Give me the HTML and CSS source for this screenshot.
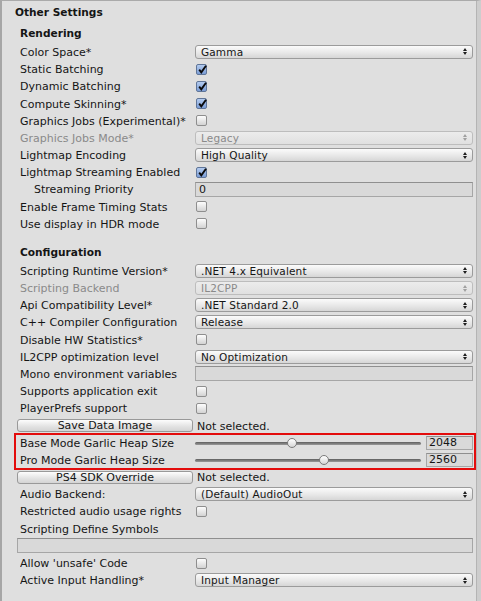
FILE: index.html
```html
<!DOCTYPE html>
<html>
<head>
<meta charset="utf-8">
<link rel="stylesheet" href="styles.css">
</head>
<body>
<div class="panel">
  <div class="title">Other Settings</div>

  <div class="section-head first">Rendering</div>
  <div class="row"><span class="label">Color Space*</span><div class="ctrl"><div class="dropdown"><span>Gamma</span><svg class="arrows" viewBox="0 0 4 7"><path d="M2 0L4 3H0ZM0 4H4L2 7Z"/></svg></div></div></div>
  <div class="row"><span class="label">Static Batching</span><div class="ctrl"><span class="cb on"><svg viewBox="0 0 11 11"><path d="M2.2 5.6L4.3 8.3L9 1.8" /></svg></span></div></div>
  <div class="row"><span class="label">Dynamic Batching</span><div class="ctrl"><span class="cb on"><svg viewBox="0 0 11 11"><path d="M2.2 5.6L4.3 8.3L9 1.8" /></svg></span></div></div>
  <div class="row"><span class="label">Compute Skinning*</span><div class="ctrl"><span class="cb on"><svg viewBox="0 0 11 11"><path d="M2.2 5.6L4.3 8.3L9 1.8" /></svg></span></div></div>
  <div class="row"><span class="label">Graphics Jobs (Experimental)*</span><div class="ctrl"><span class="cb"></span></div></div>
  <div class="row disabled"><span class="label">Graphics Jobs Mode*</span><div class="ctrl"><div class="dropdown"><span>Legacy</span><svg class="arrows" viewBox="0 0 4 7"><path d="M2 0L4 3H0ZM0 4H4L2 7Z"/></svg></div></div></div>
  <div class="row"><span class="label">Lightmap Encoding</span><div class="ctrl"><div class="dropdown"><span>High Quality</span><svg class="arrows" viewBox="0 0 4 7"><path d="M2 0L4 3H0ZM0 4H4L2 7Z"/></svg></div></div></div>
  <div class="row"><span class="label">Lightmap Streaming Enabled</span><div class="ctrl"><span class="cb on"><svg viewBox="0 0 11 11"><path d="M2.2 5.6L4.3 8.3L9 1.8" /></svg></span></div></div>
  <div class="row"><span class="label indent">Streaming Priority</span><div class="ctrl"><div class="field">0</div></div></div>
  <div class="row"><span class="label">Enable Frame Timing Stats</span><div class="ctrl"><span class="cb"></span></div></div>
  <div class="row"><span class="label">Use display in HDR mode</span><div class="ctrl"><span class="cb"></span></div></div>

  <div class="section-head">Configuration</div>
  <div class="row"><span class="label">Scripting Runtime Version*</span><div class="ctrl"><div class="dropdown"><span>.NET 4.x Equivalent</span><svg class="arrows" viewBox="0 0 4 7"><path d="M2 0L4 3H0ZM0 4H4L2 7Z"/></svg></div></div></div>
  <div class="row disabled"><span class="label">Scripting Backend</span><div class="ctrl"><div class="dropdown"><span>IL2CPP</span><svg class="arrows" viewBox="0 0 4 7"><path d="M2 0L4 3H0ZM0 4H4L2 7Z"/></svg></div></div></div>
  <div class="row"><span class="label">Api Compatibility Level*</span><div class="ctrl"><div class="dropdown"><span>.NET Standard 2.0</span><svg class="arrows" viewBox="0 0 4 7"><path d="M2 0L4 3H0ZM0 4H4L2 7Z"/></svg></div></div></div>
  <div class="row"><span class="label">C++ Compiler Configuration</span><div class="ctrl"><div class="dropdown"><span>Release</span><svg class="arrows" viewBox="0 0 4 7"><path d="M2 0L4 3H0ZM0 4H4L2 7Z"/></svg></div></div></div>
  <div class="row"><span class="label">Disable HW Statistics*</span><div class="ctrl"><span class="cb"></span></div></div>
  <div class="row"><span class="label">IL2CPP optimization level</span><div class="ctrl"><div class="dropdown"><span>No Optimization</span><svg class="arrows" viewBox="0 0 4 7"><path d="M2 0L4 3H0ZM0 4H4L2 7Z"/></svg></div></div></div>
  <div class="row"><span class="label">Mono environment variables</span><div class="ctrl"><div class="field"></div></div></div>
  <div class="row"><span class="label">Supports application exit</span><div class="ctrl"><span class="cb"></span></div></div>
  <div class="row"><span class="label">PlayerPrefs support</span><div class="ctrl"><span class="cb"></span></div></div>
  <div class="row btn-row"><span class="button">Save Data Image</span><span class="note">Not selected.</span></div>
  <div class="highlight">
    <div class="row"><span class="label">Base Mode Garlic Heap Size</span><div class="ctrl"><div class="slider"><div class="track"></div><span class="thumb" style="left:43.1%"></span></div><div class="num">2048</div></div></div>
    <div class="row"><span class="label">Pro Mode Garlic Heap Size</span><div class="ctrl"><div class="slider"><div class="track"></div><span class="thumb" style="left:56.9%"></span></div><div class="num">2560</div></div></div>
  </div>
  <div class="row btn-row"><span class="button">PS4 SDK Override</span><span class="note">Not selected.</span></div>
  <div class="row"><span class="label">Audio Backend:</span><div class="ctrl"><div class="dropdown"><span>(Default) AudioOut</span><svg class="arrows" viewBox="0 0 4 7"><path d="M2 0L4 3H0ZM0 4H4L2 7Z"/></svg></div></div></div>
  <div class="row"><span class="label">Restricted audio usage rights</span><div class="ctrl"><span class="cb"></span></div></div>
  <div class="row"><span class="label wide">Scripting Define Symbols</span></div>
  <div class="row full"><div class="field"></div></div>
  <div class="row"><span class="label">Allow 'unsafe' Code</span><div class="ctrl"><span class="cb"></span></div></div>
  <div class="row"><span class="label">Active Input Handling*</span><div class="ctrl"><div class="dropdown"><span>Input Manager</span><svg class="arrows" viewBox="0 0 4 7"><path d="M2 0L4 3H0ZM0 4H4L2 7Z"/></svg></div></div></div>
</div>
</body>
</html>
```
FILE: styles.css
```css
html, body {
  margin: 0;
  padding: 0;
  background: #dfdfdf;
}

.panel {
  width: 481px;
  height: 601px;
  box-sizing: border-box;
  background: #dfdfdf;
  border-top: 1px solid #aaaaaa;
  border-left: 2px solid #a6a6a6;
  border-right: 4px solid #cdcdcd;
  box-shadow: inset -1px 0 0 #b4b4b4;
  font-family: "DejaVu Sans", Verdana, sans-serif;
  font-size: 11px;
  color: #151515;
  overflow: hidden;
}

.title {
  height: 21px;
  line-height: 22px;
  padding-left: 13px;
  font-weight: bold;
  font-size: 10.6px;
}

.section-head {
  height: 18.8px;
  line-height: 19.8px;
  margin-top: 11px;
  padding-left: 18px;
  font-weight: bold;
  font-size: 10.6px;
}

.section-head.first {
  margin-top: 0;
  height: 21.4px;
  line-height: 22.4px;
}

.row {
  display: flex;
  align-items: center;
  height: 17.2px;
  padding: 0 4px 0 18px;
  white-space: nowrap;
}

.label {
  width: 175px;
  flex: none;
  overflow: hidden;
  padding-top: 1px;
}

.label.indent {
  box-sizing: border-box;
  padding-left: 14px;
}

.label.wide {
  width: auto;
}

.ctrl {
  flex: 1;
  min-width: 0;
  display: flex;
  align-items: center;
}

.dropdown {
  flex: 1;
  height: 14px;
  box-sizing: border-box;
  border: 1px solid #9b9b9b;
  border-radius: 3px;
  background: linear-gradient(#fbfbfb, #e6e6e6 60%, #d6d6d6);
  display: flex;
  align-items: center;
  justify-content: space-between;
  padding: 0 5px 0 5px;
  font-size: 10.5px;
  letter-spacing: 0.15px;
}

.arrows {
  width: 4px;
  height: 7px;
  fill: #1e1e1e;
}

.disabled {
  color: #8a8a8a;
}

.disabled .dropdown {
  border-color: #bdbdbd;
  background: linear-gradient(#ececec, #e0e0e0);
}

.disabled .arrows {
  fill: #a0a0a0;
}

.cb {
  width: 11px;
  height: 11px;
  box-sizing: border-box;
  margin-left: 1px;
  border: 1px solid #8e8e8e;
  border-radius: 2px;
  background: linear-gradient(#fdfdfd, #d3d3d3);
  display: block;
  position: relative;
}

.cb.on {
  border-color: #5f7598;
  background: linear-gradient(#b3cbef, #7b9dd6);
}

.cb svg {
  position: absolute;
  left: 0;
  top: -1px;
  width: 11px;
  height: 11px;
  fill: none;
  stroke: #0a0a0a;
  stroke-width: 1.9;
}

.field {
  flex: 1;
  height: 15px;
  box-sizing: border-box;
  border: 1px solid #a6a6a6;
  border-top-color: #8f8f8f;
  background: #d9d9d9;
  padding-left: 3px;
  line-height: 13px;
}

.btn-row {
  padding-left: 15px;
}

.button {
  width: 176px;
  height: 13px;
  box-sizing: border-box;
  margin-right: 4px;
  flex: none;
  border: 1px solid #999999;
  border-radius: 3px;
  background: linear-gradient(#fdfdfd, #e2e2e2 60%, #d4d4d4);
  text-align: center;
  line-height: 12px;
}

.note {
  padding-top: 1px;
}

.highlight {
  margin: 0 2px 0 13px;
  outline: 2px solid #e30c0c;
  outline-offset: -1px;
}

.highlight .row {
  padding: 0 2px 0 5px;
}

.slider {
  flex: 1;
  position: relative;
  height: 12px;
  margin-right: 5px;
}

.track {
  position: absolute;
  left: 0;
  right: 0;
  top: 5px;
  height: 3px;
  border-radius: 2px;
  background: linear-gradient(#5e5e5e, #9a9a9a);
}

.thumb {
  position: absolute;
  top: 1px;
  width: 10px;
  height: 10px;
  margin-left: -5px;
  box-sizing: border-box;
  border-radius: 50%;
  border: 1px solid #7b7b7b;
  background: linear-gradient(#ffffff, #d6d6d6);
}

.num {
  width: 47px;
  height: 14px;
  box-sizing: border-box;
  border: 1px solid #a6a6a6;
  border-top-color: #8f8f8f;
  background: #d9d9d9;
  padding-left: 2px;
  line-height: 12px;
}

.full {
  padding-left: 15px;
}
```
